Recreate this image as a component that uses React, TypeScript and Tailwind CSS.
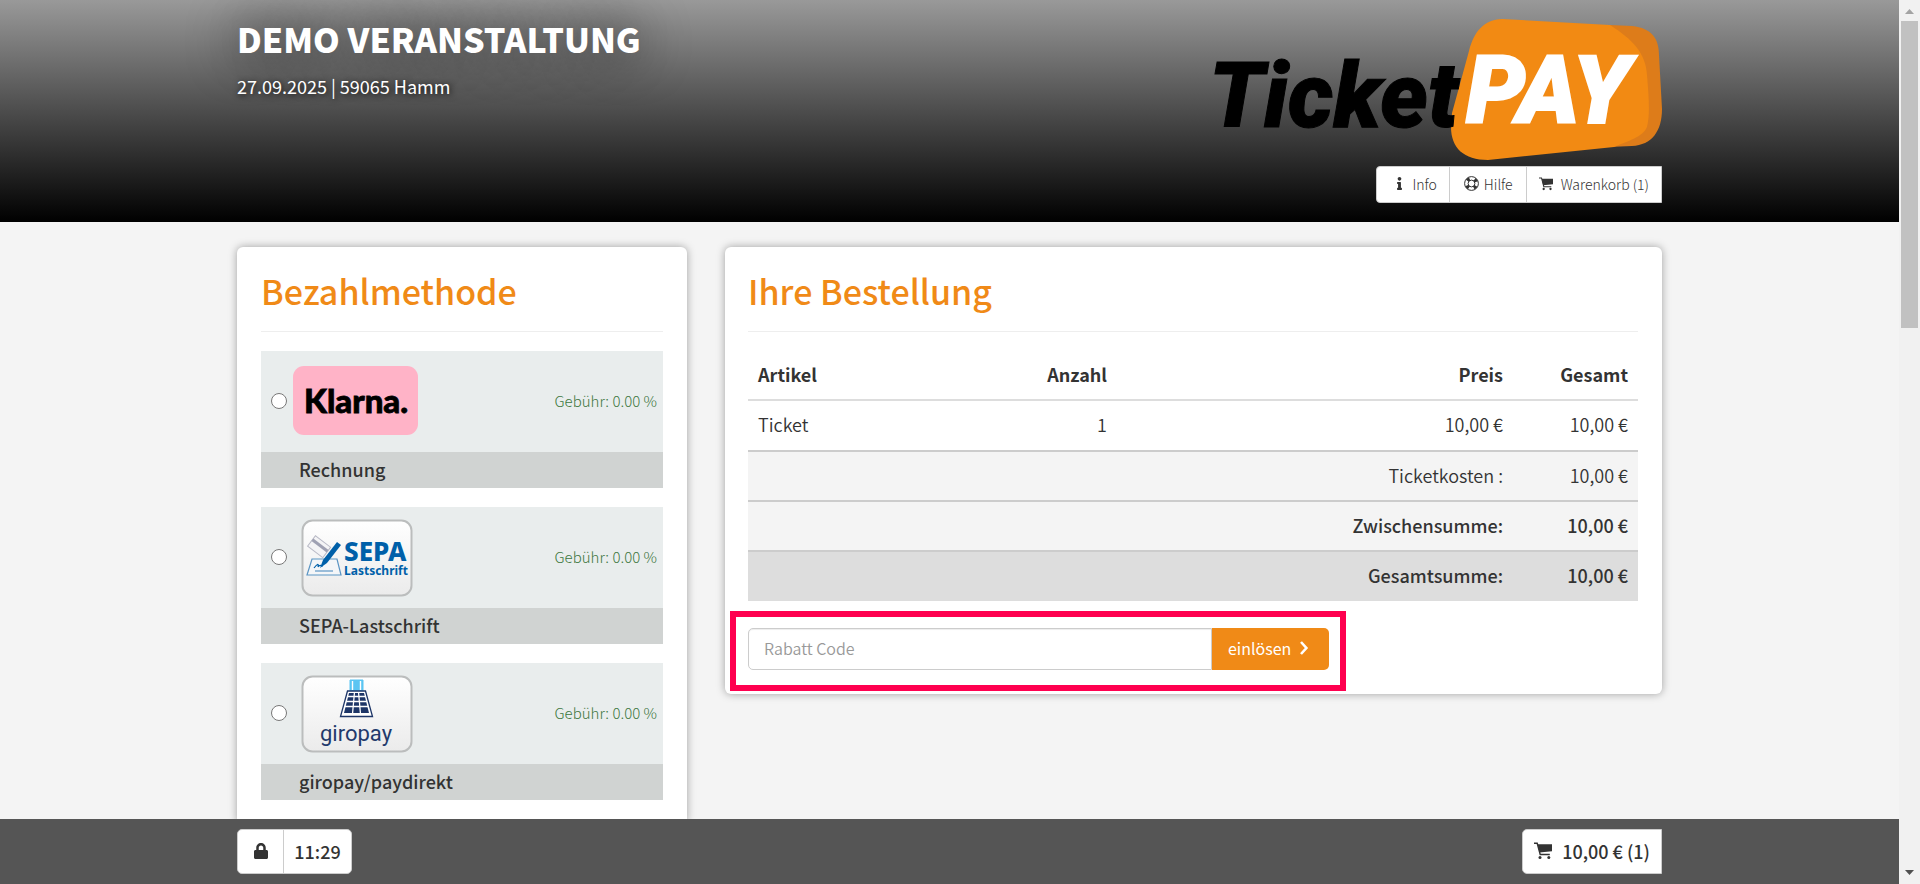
import { useState, type ReactNode } from 'react';
import { FaInfo, FaLock } from 'react-icons/fa';

const ORDER_ITEMS = [
  { name: 'Ticket', count: 1, price: '10,00 €', total: '10,00 €' },
];

const ORDER_SUMS = [
  { label: 'Ticketkosten :', value: '10,00 €', className: 'bg-[#f4f4f4] font-[350]' },
  { label: 'Zwischensumme:', value: '10,00 €', className: 'bg-[#f4f4f4] font-medium' },
  { label: 'Gesamtsumme:', value: '10,00 €', className: 'bg-[#ddd] leading-[29px] font-medium' },
];

function TicketPayLogo() {
  return (
    <svg width="450" height="142" viewBox="0 0 450 142" role="img" aria-label="TicketPAY">
      <path
        d="M398 6 L420 7 C440 9 447 20 447 36 L450 90 C450 112 440 126 420 127 L396 128 Z"
        fill="#dd7c1a"
      />
      <path
        d="M290 0 L398 6 C420 20 434 34 435 56 C437 80 438 96 435 108 C431 118 416 122 402 128 L276 141 C252 141 239 129 239 108 L240 94 L257 32 C262 12 272 1 290 0 Z"
        fill="#f28a13"
      />
      <text
        x="-3"
        y="108"
        fontFamily="Roboto, sans-serif"
        fontWeight="900"
        fontStyle="italic"
        fontSize="90"
        fill="#000"
        stroke="#000"
        strokeWidth="1"
      >
        Ticket
      </text>
      <text
        x="254"
        y="104"
        fontFamily="Roboto, sans-serif"
        fontWeight="900"
        fontStyle="italic"
        fontSize="94"
        fill="#fff"
        stroke="#fff"
        strokeWidth="2"
      >
        PAY
      </text>
    </svg>
  );
}

function CartIcon({ size }: { size: number }) {
  return (
    <svg width={size} height={size} viewBox="0 0 18 18" fill="none" aria-hidden="true">
      <path d="M0 1.2h3.2l3 11.3h9.6" stroke="#333" strokeWidth="1.4" />
      <path d="M3.6 2.2H18v7L5.4 10.6z" fill="#333" />
      <circle cx="6" cy="15.4" r="1.5" fill="#333" />
      <circle cx="14.8" cy="15.4" r="1.5" fill="#333" />
    </svg>
  );
}

function LifeRingIcon() {
  return (
    <svg width="15" height="15" viewBox="0 0 15 15" fill="none" stroke="#333" aria-hidden="true">
      <circle cx="7.5" cy="7.5" r="6.9" strokeWidth="1" />
      <circle cx="7.5" cy="7.5" r="3.4" strokeWidth="1" />
      <circle
        cx="7.5"
        cy="7.5"
        r="5"
        strokeWidth="3.6"
        strokeDasharray="2.8 5.054"
        strokeDashoffset="-2.527"
      />
    </svg>
  );
}

function ChevronIcon() {
  return (
    <svg width="10" height="14" viewBox="0 0 10 14" fill="none" aria-hidden="true">
      <path d="M2 1l5.4 6L2 13" stroke="#fff" strokeWidth="2.6" />
    </svg>
  );
}

function KlarnaLogo() {
  return (
    <svg width="125" height="69" viewBox="0 0 125 69" role="img" aria-label="Klarna">
      <rect width="125" height="69" rx="11" fill="#ffb3c7" />
      <text
        x="11"
        y="47"
        fontFamily="Lato, sans-serif"
        fontWeight="900"
        fontSize="33"
        fill="#000"
        stroke="#000"
        strokeWidth="0.8"
      >
        Klarna.
      </text>
    </svg>
  );
}

function LogoPlate({ label, children }: { label: string; children: ReactNode }) {
  return (
    <svg width="112" height="80" viewBox="0 -2 112 80" role="img" aria-label={label}>
      <defs>
        <linearGradient id="plate" x1="0" y1="0" x2="0" y2="1">
          <stop offset="0" stopColor="#fff" />
          <stop offset="1" stopColor="#ebebeb" />
        </linearGradient>
      </defs>
      <rect x="1.5" y="1.5" width="109" height="75" rx="10" fill="url(#plate)" stroke="#bbbdbd" strokeWidth="2" />
      {children}
    </svg>
  );
}

function SepaLogo() {
  return (
    <LogoPlate label="SEPA Lastschrift">
      <g transform="rotate(37 16 28)" fill="#f4f4f6" stroke="#b9bac6" strokeWidth="1">
        <rect x="8" y="20" width="19" height="13" />
        <path d="M8 25h19" stroke="#9fa1b3" strokeWidth="3" />
      </g>
      <path d="M11 40h25l4 16H6z" fill="#f4f6f8" stroke="#5b95c4" strokeWidth="1.2" />
      <path d="M14 52h18" stroke="#5b95c4" strokeWidth="1.2" />
      <path d="M13 49c3-4 5-5 4-1 2-3 3-1 5-1" fill="none" stroke="#0060a9" strokeWidth="1.2" />
      <path d="M19 49l3-8 14-18 4 3-14 18z" fill="#0060a9" />
      <text x="43" y="42" fontFamily="'Noto Sans', sans-serif" fontWeight="800" fontSize="26" fill="#0060a9">
        SEPA
      </text>
      <text x="43" y="56" fontFamily="'Noto Sans', sans-serif" fontWeight="700" fontSize="12" fill="#0060a9">
        Lastschrift
      </text>
    </LogoPlate>
  );
}

function GiropayLogo() {
  return (
    <LogoPlate label="giropay">
      <path d="M49 5h13v11H49z" fill="#5bc5f2" stroke="#5bc5f2" />
      <path d="M51.5 6v9M59.5 6v9" stroke="#fff" strokeWidth="1.4" />
      <path d="M46.5 16h18l7 25.5H39.5z" fill="#fff" stroke="#1d3567" strokeWidth="1.3" />
      <path d="M48 18h15l5 20H43z" fill="#1d3567" />
      <path
        d="M46 21.5h19M45 26.5h21M44 31.5h23M53.5 17l-2 22M57.5 17l2 22"
        stroke="#fff"
        strokeWidth="1.3"
      />
      <text x="19" y="66" fontFamily="Roboto, sans-serif" fontWeight="400" fontSize="22" fill="#233a6c">
        giropay
      </text>
    </LogoPlate>
  );
}

const PAYMENT_METHODS = [
  { id: 'klarna', label: 'Rechnung', fee: '0.00', logo: <KlarnaLogo />, logoClass: 'ml-1.5' },
  { id: 'sepa', label: 'SEPA-Lastschrift', fee: '0.00', logo: <SepaLogo />, logoClass: 'ml-3.5' },
  { id: 'giropay', label: 'giropay/paydirekt', fee: '0.00', logo: <GiropayLogo />, logoClass: 'ml-3.5' },
];

function Header() {
  return (
    <header className="bg-[linear-gradient(#999,#000)]">
      <div className="mx-auto flex h-[222px] max-w-[1425px] justify-between">
        <div className="pt-[19px] text-white">
          <h1 className="text-[34px] leading-10 font-black uppercase [text-shadow:0_0_50px_#000]">
            Demo Veranstaltung
          </h1>
          <p className="mt-[11px] text-lg leading-8 [text-shadow:1px_1px_6px_#000]">27.09.2025 | 59065 Hamm</p>
        </div>
        <div className="flex flex-col items-end pt-[19px]">
          <TicketPayLogo />
          <nav className="mt-[5px] flex h-[37px] rounded-l-sm border border-[#ccc] bg-white text-sm font-light">
            <a href="#info" className="flex items-center gap-1.5 pr-3 pb-0.5 pl-4">
              <FaInfo size={13} />
              Info
            </a>
            <a href="#hilfe" className="flex items-center gap-[5px] border-l border-[#ccc] pr-[13px] pb-0.5 pl-3.5">
              <LifeRingIcon />
              Hilfe
            </a>
            <a href="#warenkorb" className="flex items-center gap-2 border-l border-[#ccc] px-3 pb-0.5">
              <CartIcon size={14} />
              Warenkorb (1)
            </a>
          </nav>
        </div>
      </div>
    </header>
  );
}

function Card({ title, className, children }: { title: string; className: string; children: ReactNode }) {
  return (
    <section className={`rounded-md bg-white p-6 shadow-[0_0_8px_rgba(0,0,0,0.35)] ${className}`}>
      <h2 className="border-b border-[#eee] pb-5 text-[34px] leading-10 font-medium text-[#f08a17]">{title}</h2>
      {children}
    </section>
  );
}

function PaymentMethods() {
  const [selected, setSelected] = useState('');

  return (
    <Card title="Bezahlmethode" className="w-[450px] shrink-0">
      <div className="mt-[19px] flex flex-col gap-[19px]">
        {PAYMENT_METHODS.map((method) => (
          <label key={method.id} className="block">
            <span className="flex h-[101px] items-center bg-[#e9eded] pr-1.5 pb-0.5 pl-2.5">
              <input
                type="radio"
                name="payment"
                className="size-4"
                checked={selected === method.id}
                onChange={() => setSelected(method.id)}
              />
              <span className={method.logoClass}>{method.logo}</span>
              <span className="ml-auto pt-0.5 text-[15px] font-light text-[#3c763d]">Gebühr: {method.fee} %</span>
            </span>
            <span className="block bg-[#d0d3d2] pb-0.5 pl-[38px] text-lg leading-[34px] font-medium">
              {method.label}
            </span>
          </label>
        ))}
      </div>
    </Card>
  );
}

function Order() {
  const [code, setCode] = useState('');

  return (
    <Card title="Ihre Bestellung" className="min-w-0 flex-1 pl-[23px]">
      <table className="mt-[19px] w-full table-fixed text-lg leading-7">
        <thead>
          <tr className="border-b-2 border-[#ddd]">
            <th className="w-[24%] px-2.5 pt-[9px] pb-[11px] text-left font-bold">Artikel</th>
            <th className="px-2.5 pt-[9px] pb-[11px] text-right font-bold">Anzahl</th>
            <th className="w-[396px] px-2.5 pt-[9px] pb-[11px] text-right font-bold">Preis</th>
            <th className="w-[125px] px-2.5 pt-[9px] pb-[11px] text-right font-bold">Gesamt</th>
          </tr>
        </thead>
        <tbody>
          {ORDER_ITEMS.map((item) => (
            <tr key={item.name} className="leading-[29px] font-[350]">
              <td className="px-2.5 pt-[9px] pb-[11px]">{item.name}</td>
              <td className="px-2.5 pt-[9px] pb-[11px] text-right">{item.count}</td>
              <td className="px-2.5 pt-[9px] pb-[11px] text-right">{item.price}</td>
              <td className="px-2.5 pt-[9px] pb-[11px] text-right">{item.total}</td>
            </tr>
          ))}
          {ORDER_SUMS.map((sum) => (
            <tr key={sum.label} className={`border-t-2 border-[#ccc] ${sum.className}`}>
              <td colSpan={3} className="px-2.5 pt-[9px] pb-[11px] text-right">
                {sum.label}
              </td>
              <td className="px-2.5 pt-[9px] pb-[11px] text-right">{sum.value}</td>
            </tr>
          ))}
        </tbody>
      </table>

      <form className="relative mt-[27px] flex h-[42px] max-w-[581px] text-base" onSubmit={(e) => e.preventDefault()}>
        <input
          type="text"
          aria-label="Rabatt Code"
          placeholder="Rabatt Code"
          value={code}
          onChange={(e) => setCode(e.target.value)}
          className="min-w-0 flex-1 rounded-l-[5px] border border-[#ccc] px-[15px] pb-0.5 font-[350] shadow-[inset_0_1px_1px_rgba(0,0,0,0.075)] placeholder:text-[#999]"
        />
        <button
          type="submit"
          className="flex w-[117px] items-center gap-2 rounded-r-[5px] bg-[#f08a17] pb-0.5 pl-4 text-white"
        >
          einlösen
          <ChevronIcon />
        </button>
        <div className="pointer-events-none absolute -top-[17px] -right-[17px] -bottom-[21px] -left-[18px] border-6 border-[#ff004f]" />
      </form>
    </Card>
  );
}

function FooterBar() {
  return (
    <footer className="bg-[#555] py-2.5">
      <div className="mx-auto flex h-[45px] max-w-[1425px] justify-between text-lg font-medium">
        <div className="flex rounded-[5px] border border-[#ccc] bg-white">
          <span className="flex w-[46px] items-center justify-center border-r border-[#ccc] pb-0.5">
            <FaLock size={16} />
          </span>
          <span className="flex w-[67px] items-center justify-center pb-0.5">11:29</span>
        </div>
        <button
          type="button"
          className="flex items-center gap-2.5 rounded-l-[5px] border border-[#ccc] bg-white px-[11px] pb-0.5"
        >
          <CartIcon size={18} />
          10,00 € (1)
        </button>
      </div>
    </footer>
  );
}

function Scrollbar() {
  return (
    <div className="flex w-[21px] shrink-0 flex-col items-center bg-[#f1f1f1]" aria-hidden="true">
      <svg width="21" height="21" viewBox="0 0 21 21">
        <path d="M6 14h9l-4.5-5z" fill="#a3a3a3" />
      </svg>
      <div className="h-[307px] w-[17px] bg-[#c1c1c1]" />
      <svg width="21" height="21" viewBox="0 0 21 21" className="mt-auto">
        <path d="M6 7h9l-4.5 5z" fill="#505050" />
      </svg>
    </div>
  );
}

export default function App() {
  return (
    <div className="flex h-screen bg-[#f4f4f4] font-['Noto_Sans_CJK_SC',sans-serif] text-[#333]">
      <div className="flex min-w-0 flex-1 flex-col">
        <div className="min-h-0 flex-1 overflow-hidden">
          <Header />
          <main className="mx-auto flex max-w-[1425px] items-start gap-[38px] pt-[25px]">
            <PaymentMethods />
            <Order />
          </main>
        </div>
        <FooterBar />
      </div>
      <Scrollbar />
    </div>
  );
}
